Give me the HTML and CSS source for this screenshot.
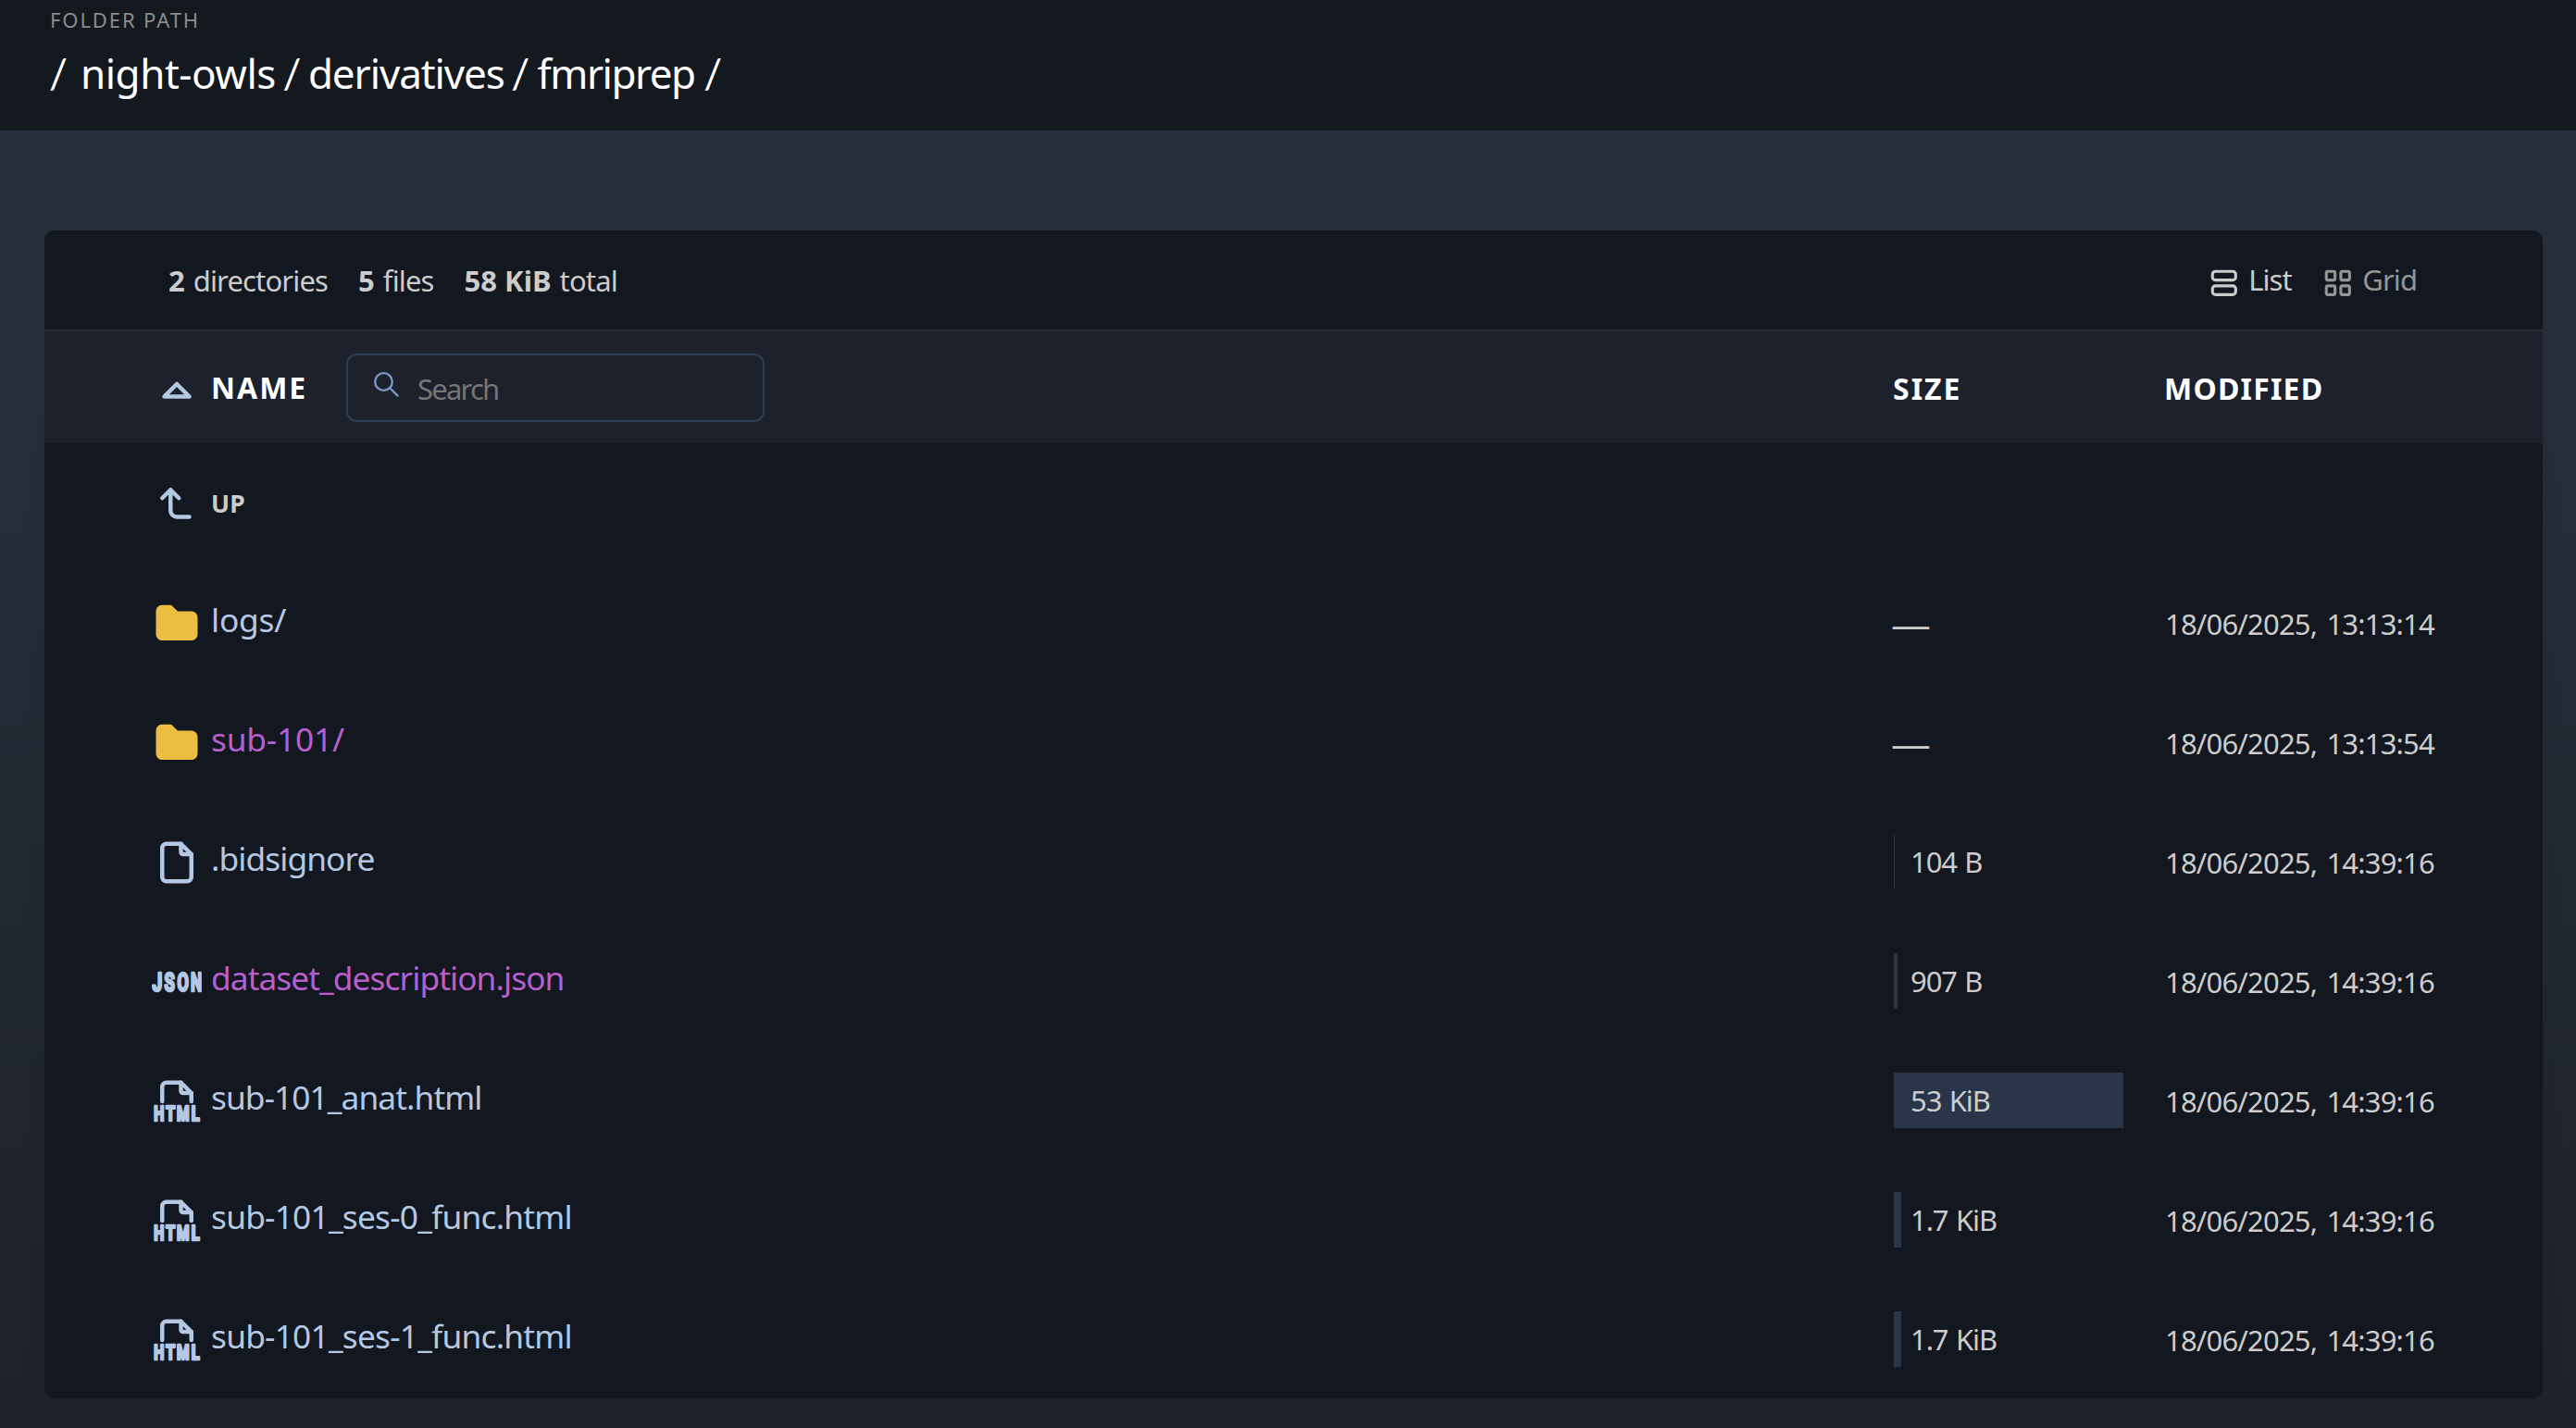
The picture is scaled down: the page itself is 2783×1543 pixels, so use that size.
FILE: index.html
```html
<!DOCTYPE html>
<html lang="en">
<head>
<meta charset="utf-8">
<title>night-owls / derivatives / fmriprep</title>
<link rel="stylesheet" href="styles.css">
</head>
<body>
<svg class="sprite" aria-hidden="true">
  <symbol id="folder" viewBox="0 0 24 24"><path fill="#ebbe41" d="M9 3a1 1 0 0 1 .608 .206l.1 .087l2.706 2.707h6.586a3 3 0 0 1 2.995 2.824l.005 .176v8a3 3 0 0 1 -2.824 2.995l-.176 .005h-14a3 3 0 0 1 -2.995 -2.824l-.005 -.176v-11a3 3 0 0 1 2.824 -2.995l.176 -.005h4z"/></symbol>
  <symbol id="file" viewBox="0 0 24 24"><path d="M14 3v4a1 1 0 0 0 1 1h4"/><path d="M17 21h-10a2 2 0 0 1 -2 -2v-14a2 2 0 0 1 2 -2h7l5 5v11a2 2 0 0 1 -2 2z"/></symbol>
  <symbol id="json" viewBox="0 0 24 24" overflow="visible"><text class="glyph" y="16.3" font-size="12"><tspan x="0.2" textLength="4.8" lengthAdjust="spacingAndGlyphs">J</tspan><tspan x="6" textLength="5" lengthAdjust="spacingAndGlyphs">S</tspan><tspan x="12.2" textLength="5.5" lengthAdjust="spacingAndGlyphs">O</tspan><tspan x="18.7" textLength="5.4" lengthAdjust="spacingAndGlyphs">N</tspan></text></symbol>
  <symbol id="html" viewBox="0 0 24 24" overflow="visible"><path d="M14 3v4a1 1 0 0 0 1 1h4"/><path d="M5 12v-7a2 2 0 0 1 2 -2h7l5 5v4"/><text class="glyph" y="21.4" font-size="9.4"><tspan x="1" textLength="4.9" lengthAdjust="spacingAndGlyphs">H</tspan><tspan x="6.8" textLength="4.4" lengthAdjust="spacingAndGlyphs">T</tspan><tspan x="12" textLength="6" lengthAdjust="spacingAndGlyphs">M</tspan><tspan x="19" textLength="3.9" lengthAdjust="spacingAndGlyphs">L</tspan></text></symbol>
</svg>

<header class="header">
  <div class="header-label">Folder Path</div>
  <h1 class="path"><span class="slash root">/</span><a class="owls">night-owls</a><span class="slash">/</span><a class="deriv">derivatives</a><span class="slash">/</span><a class="prep">fmriprep</a><span class="slash">/</span></h1>
</header>

<main class="card">
  <div class="meta">
    <div class="summary">
      <div class="stat"><b>2</b><span>directories</span></div>
      <div class="stat"><b>5</b><span>files</span></div>
      <div class="stat"><b>58 KiB</b><span>total</span></div>
    </div>
    <div class="layouts">
      <a class="layout current"><svg viewBox="0 0 24 24"><rect x="4" y="4" width="16" height="6" rx="2"/><rect x="4" y="14" width="16" height="6" rx="2"/></svg><span>List</span></a>
      <a class="layout"><svg viewBox="0 0 24 24"><rect x="4" y="4" width="6" height="6" rx="1"/><rect x="14" y="4" width="6" height="6" rx="1"/><rect x="4" y="14" width="6" height="6" rx="1"/><rect x="14" y="14" width="6" height="6" rx="1"/></svg><span>Grid</span></a>
    </div>
  </div>

  <div class="row head">
    <div class="name">
      <svg class="icon sort" viewBox="0 0 24 24"><path d="M18 14l-6 -6l-6 6h12"/></svg>
      <a class="col-title name-title">NAME</a>
      <label class="search"><svg viewBox="0 0 27 27"><circle cx="10.5" cy="10.5" r="9.3"/><path d="M17.2 17.2l8.4 8.4"/></svg><span>Search</span></label>
    </div>
    <a class="col-title size-title">SIZE</a>
    <a class="col-title mod-title">MODIFIED</a>
  </div>

  <div class="row">
    <div class="name"><svg class="icon up-icon" viewBox="0 0 24 24"><path d="M18 18h-6a3 3 0 0 1 -3 -3v-10l-4 4m8 0l-4 -4"/></svg><span class="up">UP</span></div>
  </div>
  <div class="row">
    <div class="name"><svg class="icon folder"><use href="#folder"/></svg><a class="link dir">logs/</a></div>
    <div class="dash">—</div>
    <time class="date">18/06/2025, 13:13:14</time>
  </div>
  <div class="row">
    <div class="name"><svg class="icon folder"><use href="#folder"/></svg><a class="link dir visited">sub-101/</a></div>
    <div class="dash">—</div>
    <time class="date">18/06/2025, 13:13:54</time>
  </div>
  <div class="row">
    <div class="name"><svg class="icon"><use href="#file"/></svg><a class="link">.bidsignore</a></div>
    <div class="size"><div class="bar" style="width:0.3%"></div><span>104 B</span></div>
    <time class="date">18/06/2025, 14:39:16</time>
  </div>
  <div class="row">
    <div class="name"><svg class="icon"><use href="#json"/></svg><a class="link visited">dataset_description.json</a></div>
    <div class="size"><div class="bar" style="width:1.7%"></div><span>907 B</span></div>
    <time class="date">18/06/2025, 14:39:16</time>
  </div>
  <div class="row">
    <div class="name"><svg class="icon"><use href="#html"/></svg><a class="link">sub-101_anat.html</a></div>
    <div class="size"><div class="bar" style="width:100%"></div><span>53 KiB</span></div>
    <time class="date">18/06/2025, 14:39:16</time>
  </div>
  <div class="row">
    <div class="name"><svg class="icon"><use href="#html"/></svg><a class="link func">sub-101_ses-0_func.html</a></div>
    <div class="size"><div class="bar" style="width:3.2%"></div><span>1.7 KiB</span></div>
    <time class="date">18/06/2025, 14:39:16</time>
  </div>
  <div class="row">
    <div class="name"><svg class="icon"><use href="#html"/></svg><a class="link func">sub-101_ses-1_func.html</a></div>
    <div class="size"><div class="bar" style="width:3.2%"></div><span>1.7 KiB</span></div>
    <time class="date">18/06/2025, 14:39:16</time>
  </div>
</main>
</body>
</html>
```
FILE: styles.css
```css
* { box-sizing: border-box; }
html, body { margin: 0; height: 1543px; overflow: hidden; }
body {
  font-family: "Noto Sans", "Open Sans", sans-serif;
  font-size: 31px;
  color: #cccccc;
  background: linear-gradient(180deg, #262f3d 0%, #262f3b 25%, #1e2229 100%);
}
.sprite { display: none; }
svg { fill: none; stroke: currentColor; stroke-width: 2; stroke-linecap: round; stroke-linejoin: round; flex: none; }
symbol path[fill] { stroke: none; }
.glyph {
  font-family: Roboto, "Liberation Sans", sans-serif;
  font-weight: 700;
  fill: currentColor;
  stroke-width: 1.2;
}

.header { height: 141px; padding: 6px 54px 0; background: #14181f; }
.header-label { font-size: 22px; line-height: 30px; letter-spacing: 1.9px; text-transform: uppercase; color: #8c8c8c; }
.path { display: flex; gap: 7.5px; margin: 13px 0 0 -1px; font-size: 44px; line-height: 60px; font-weight: 400; color: #fff; }
.slash { font-family: Lato, sans-serif; }
.root { margin-right: 6.5px; }
.owls { letter-spacing: -0.45px; }
.deriv { letter-spacing: -1.1px; }
.prep { letter-spacing: -1.5px; margin: 0 2px 0 1px; }

.card { margin: 108px 36px 0 48px; background: #13171f; border-radius: 11px; overflow: hidden; box-shadow: 0 5px 25px 1px rgba(0, 0, 0, 0.05); }
.meta { display: flex; justify-content: space-between; align-items: center; height: 109px; padding: 0 136px 0 134px; border-bottom: 2px solid #272d38; }
.summary { display: flex; gap: 33px; }
.stat { display: flex; gap: 9px; letter-spacing: -0.85px; }
.stat b { letter-spacing: 0; }
.layouts { display: flex; gap: 31px; margin-top: -2px; }
.layout { display: flex; align-items: center; gap: 8px; letter-spacing: -0.95px; color: #959595; }
.layout.current { color: #cccccc; }
.layout svg { width: 37.6px; height: 37.6px; margin-top: 8px; }

.row { display: grid; grid-template-columns: 1998px 293px 1fr; align-items: center; height: 129px; }
.head { height: 121px; background: #1d212b; color: #fff; }
.name { display: flex; align-items: center; padding-left: 116px; }
.icon { width: 54px; height: 54px; margin: 3px 10px 0 0; color: #b4c8e4; }
.icon.sort { margin-top: 10px; }
.col-title { font-size: 32px; font-weight: 700; letter-spacing: 2px; }
.name-title { width: 106px; }
.size-title { margin: 1px 0 0 -1px; }
.mod-title { margin: 1px 0 0 -1px; letter-spacing: 1.2px; }
.search { display: flex; align-items: center; width: 452px; height: 74px; margin-left: 40px; padding-left: 28px; border: 2px solid #2f3d54; border-radius: 11px; color: #757575; letter-spacing: -1.8px; }
.search svg { width: 27px; height: 27px; margin: -6px 20px 0 0; stroke: #7f95c4; stroke-width: 2.3; }
.search span { margin-top: 2px; }
.up { font-size: 26.5px; font-weight: 700; letter-spacing: 0.2px; }
.link { font-size: 35.3px; line-height: 48px; margin-top: -8px; letter-spacing: -0.93px; color: #b4c8e4; }
.link.dir { letter-spacing: -0.2px; }
.link.func { letter-spacing: -0.78px; }
.link.visited { color: #b75fcc; }
.dash { font: 38px/40px "Open Sans", sans-serif; transform: scaleX(1.13); transform-origin: left; margin: 2px 0 0 -3px; width: 40px; }
.size { position: relative; width: 248px; height: 60px; margin-top: 1px; line-height: 61px; letter-spacing: -1.1px; word-spacing: 1.5px; padding-left: 18px; }
.bar { position: absolute; left: 0; top: 0; height: 60px; background: #293548; }
.size span { position: relative; }
.date { margin-top: 2px; letter-spacing: -0.82px; word-spacing: 3px; }
```
